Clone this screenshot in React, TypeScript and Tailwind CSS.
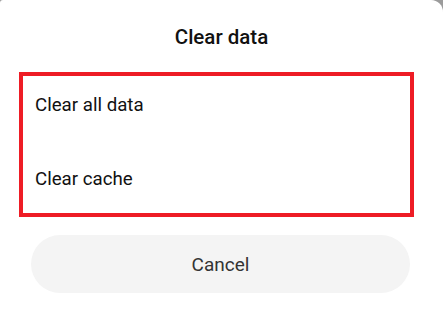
const App = () => {
  return (
    <div className="w-[443px] h-[322px] bg-[#9b9b9b] overflow-hidden">
      <div
        className="h-full bg-white rounded-tl-[3px] rounded-tr-[12px] pt-[25px] text-[#111]"
        style={{ fontFamily: "Roboto, 'Noto Sans', sans-serif" }}
      >
        <div className="text-center text-[20.5px] leading-[24px] font-medium">
          Clear data
        </div>

        {/* choices */}
        <div className="mt-[23px] ml-[19px] w-[395px] border-[4px] border-[#ee1c25] pt-[17px] pb-[22px] pl-[12px] flex flex-col gap-[50px] text-[18.7px] leading-[24px]">
          <div>Clear all data</div>
          <div>Clear cache</div>
        </div>

        <button className="mt-[18px] ml-[31px] w-[379px] h-[58px] rounded-full bg-[#f4f4f4] text-[19px] text-[#333] flex items-center justify-center pt-[2px]">
          Cancel
        </button>
      </div>
    </div>
  );
};

export default App;
